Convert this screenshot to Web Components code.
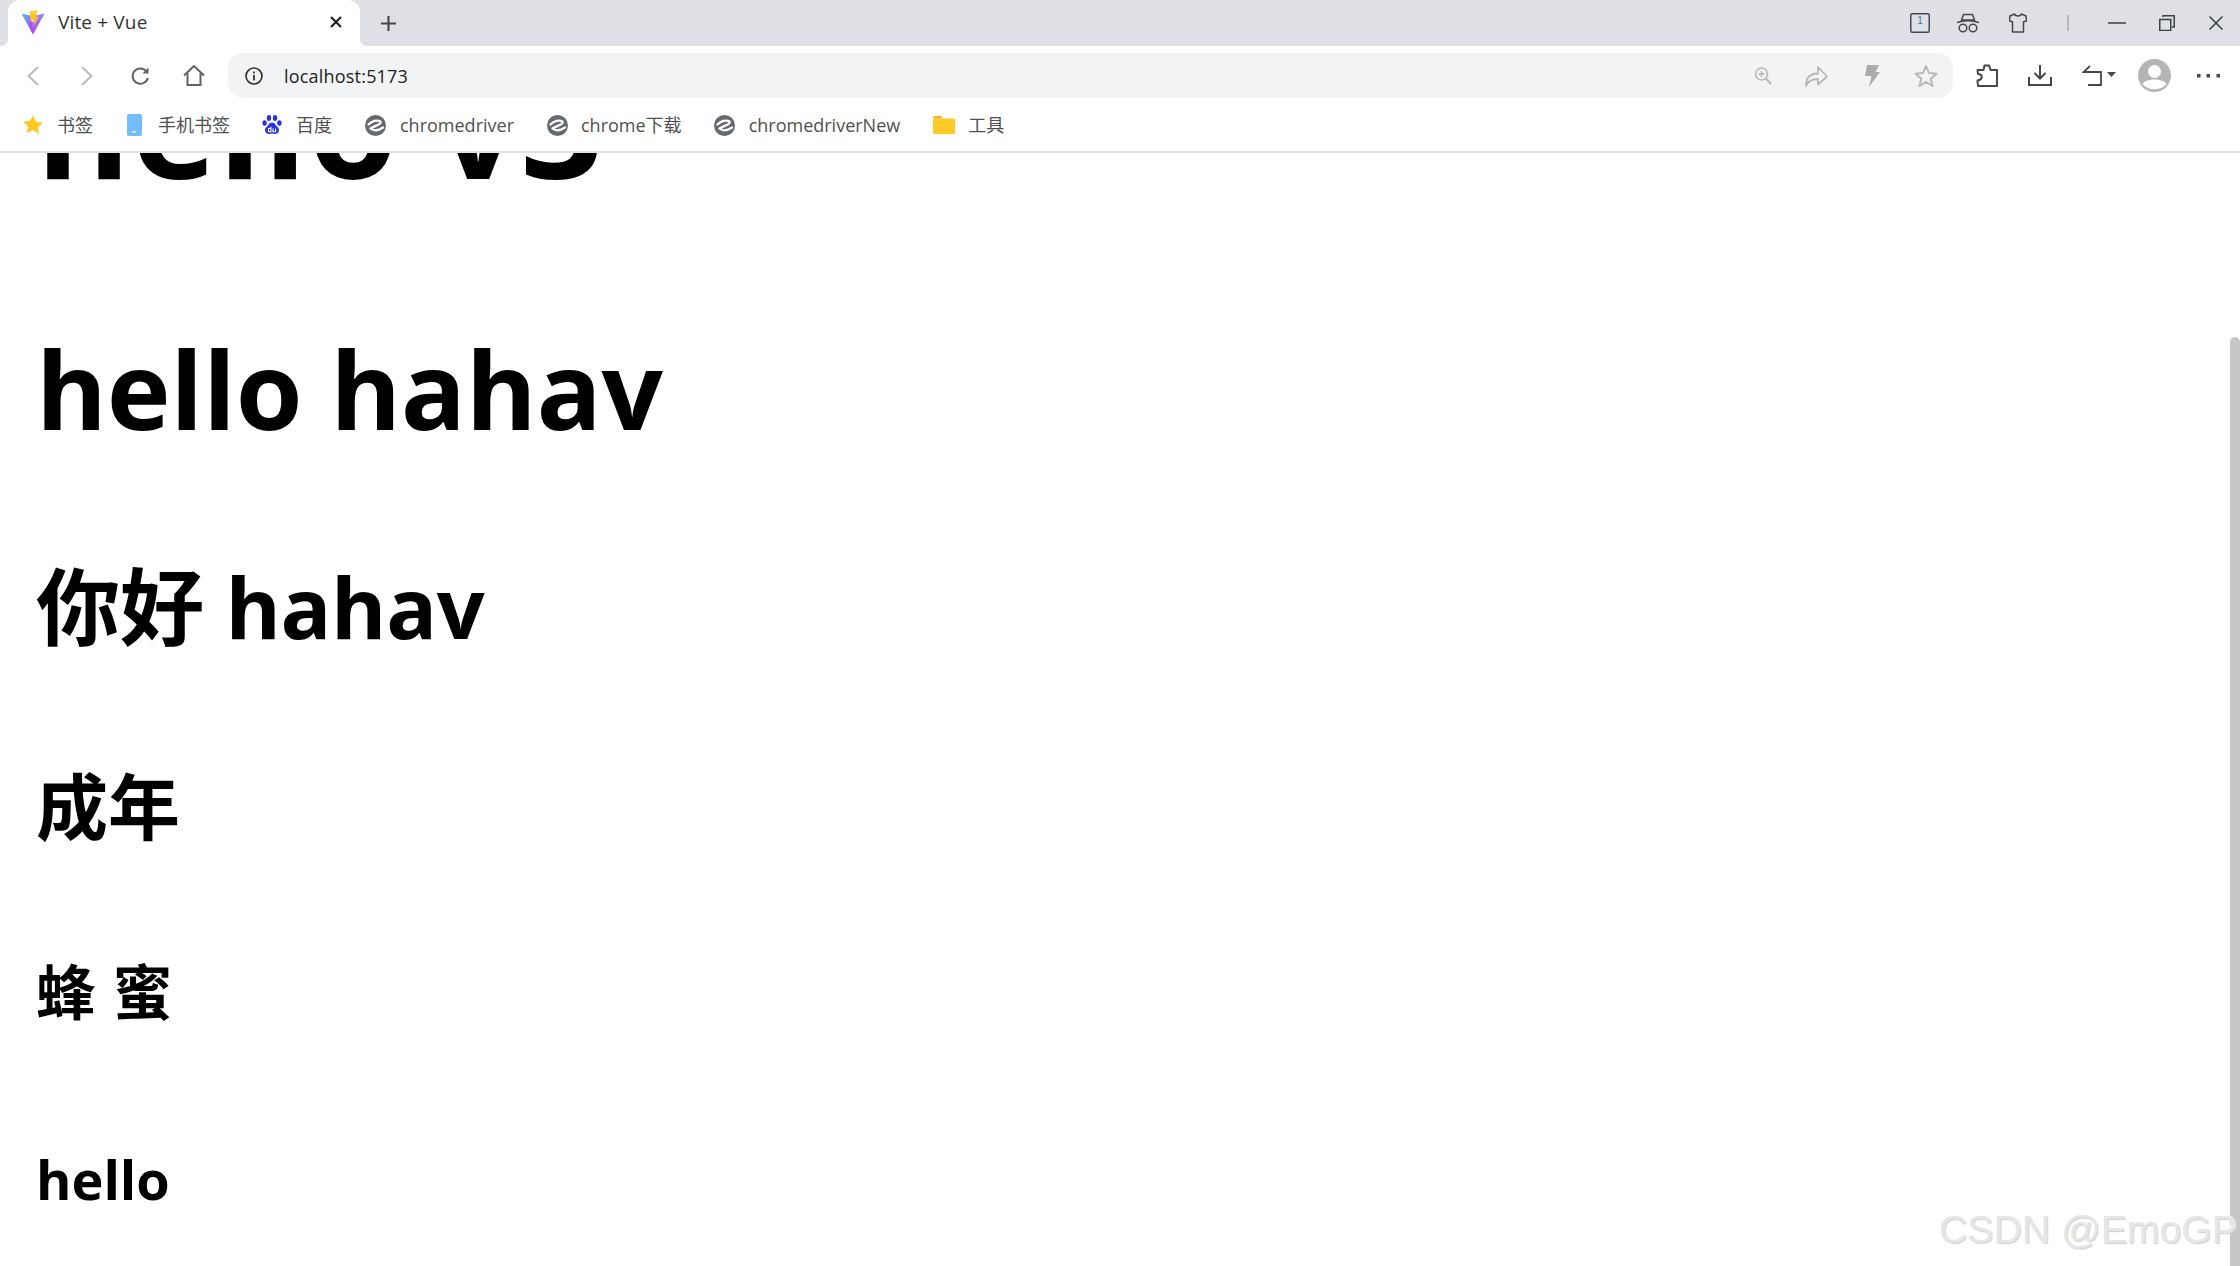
<!DOCTYPE html>
<html lang="zh"><head><meta charset="utf-8"><title>Vite + Vue</title>
<style>
html,body{margin:0;height:100%;overflow:hidden;background:#fff}
body{font-family:"Open Sans","Noto Sans CJK SC",sans-serif}
</style></head><body>
<browser-window>
  <tab-strip></tab-strip>
  <nav-bar></nav-bar>
  <bookmark-bar>
    <bookmark-item label="书签" icon="star" gap="14" width="34"></bookmark-item>
    <bookmark-item label="手机书签" icon="phone" gap="16" width="32"></bookmark-item>
    <bookmark-item label="百度" icon="baidu" gap="14" width="33"></bookmark-item>
    <bookmark-item label="chromedriver" icon="edge" gap="14" width="33"></bookmark-item>
    <bookmark-item label="chrome下载" icon="edge" gap="13" width="32"></bookmark-item>
    <bookmark-item label="chromedriverNew" icon="edge" gap="14" width="33"></bookmark-item>
    <bookmark-item label="工具" icon="folder" gap="13" width="0"></bookmark-item>
  </bookmark-bar>
  <page-view>
    <page-heading size="144" top="-128" line="196" track="1.2">hello v3</page-heading>
    <page-heading size="108" top="94" line="147" track="-.25">hello hahav</page-heading>
    <page-heading size="84.24" top="87" line="115" track="-.3">你好 hahav</page-heading>
    <page-heading size="72" top="93" line="98" track="0">成年</page-heading>
    <page-heading size="59.76" top="97" line="81" track=".7">蜂 蜜</page-heading>
    <page-heading size="54" top="109" line="74" track="0">hello</page-heading>
  </page-view>
</browser-window>
<script>
const S=(w,h,body,extra='')=>`<svg width="${w}" height="${h}" viewBox="0 0 ${w} ${h}" fill="none" ${extra}>${body}</svg>`;
const edge=S(21,21,`<circle cx="10.5" cy="10.5" r="10.5" fill="#666a70"/><path d="M3.500 9.500C7 6 12 4.500 15.500 6.500C17 9.500 10 10.500 5.500 13.500C9 16.500 13.500 15.500 18 12.500" stroke="#fff" stroke-width="2.300" stroke-linecap="round" stroke-linejoin="round"/>`);
const ICONS={
 star:S(20,20,`<path d="M10 .5l3 6.300 6.800.9-5 4.700 1.300 6.800L10 15l-6.100 3.200 1.300-6.800-5-4.700 6.800-.9z" fill="#ffc720"/>`),
 phone:S(15,22,`<rect width="15" height="22" rx="2" fill="#73bcff"/><rect x="5" y="17" width="4" height="1.500" fill="#fff"/>`),
 baidu:S(20,20,`<g fill="#2932e1"><ellipse cx="2.600" cy="8" rx="2.200" ry="2.800"/><ellipse cx="7" cy="3" rx="2.200" ry="2.900"/><ellipse cx="13" cy="3" rx="2.200" ry="2.900"/><ellipse cx="17.400" cy="8" rx="2.200" ry="2.800"/><path d="M10 7.500c3 0 3.500 3 6 5 2 2 1 6.500-3 6.500-1.500 0-2-.5-3-.5s-1.500.5-3 .5c-4 0-5-4.500-3-6.500 2.500-2 3-5 6-5z"/></g><path d="M6.500 13.500v3.300h2.400v-5M6.500 13.500h2.400M11 13.500v3.300h2.600v-3.300" stroke="#fff" stroke-width="1.100"/>`),
 edge,
 folder:S(22,18,`<path d="M0 2a2 2 0 0 1 2-2h6l2 2.500H0z" fill="#ffa733"/><rect y="2.500" width="22" height="15.500" rx="1" fill="#ffc926"/>`)
};
class BrowserWindow extends HTMLElement{constructor(){super();this.attachShadow({mode:'open'}).innerHTML=`<style>
:host{display:flex;flex-direction:column;height:1266px;width:2240px;position:relative;overflow:hidden;background:#fff}
.mark{position:absolute;left:1939px;top:1207px;font:39.2px/46px "Liberation Sans",sans-serif;color:#e6e6e6;text-shadow:1px 1px 1px #cfcfcf,-1px -1px 0 #fff;white-space:nowrap;z-index:3}
</style><slot></slot><span class="mark">CSDN @EmoGP</span>`}}
class TabStrip extends HTMLElement{constructor(){super();this.attachShadow({mode:'open'}).innerHTML=`<style>
:host{display:flex;flex:none;height:46px;background:#dee0e5;align-items:stretch;color:#3c4043}
.tab{margin-left:8px;width:352px;background:#fff;border-radius:12px 12px 0 0;display:flex;align-items:center;padding-left:13px;padding-bottom:2px;box-sizing:border-box;position:relative}
.tab::before,.tab::after{content:"";position:absolute;bottom:0;width:8px;height:8px;background:#fff}
.tab::before{left:-8px;background:radial-gradient(circle at 0 0,#dee0e5 8px,#fff 8.500px)}
.tab::after{right:-8px;background:radial-gradient(circle at 100% 0,#dee0e5 8px,#fff 8.500px)}
.title{font:19px/24px "Open Sans","Noto Sans CJK SC",sans-serif;margin-left:13px;color:#333;flex:1;letter-spacing:.15px}
.close{margin-right:18px;display:flex}.plus{margin-left:21px;align-self:center;display:flex}
.right{margin-left:auto;display:flex;align-items:center}
</style>
<div class="tab">
 ${S(24,25,`<path d="M.5 3.500L12 24.500 23.500 3.500 15 5.500 12 12z" fill="url(#v)"/><path d="M1 3.500L9 5.500 11 14 12 24z" fill="url(#v)"/><path d="M8.500 1.500L16.500 0l-1.800 7 3.500-.9-6 11 .6-7.500-3.600.9z" fill="url(#b)"/><defs><linearGradient id="v" x1="0" y1="0" x2=".7" y2="1"><stop offset="0" stop-color="#41c5ff"/><stop offset=".6" stop-color="#9a6cff"/><stop offset="1" stop-color="#bd34fe"/></linearGradient><linearGradient id="b" x1="0" y1="0" x2="0" y2="1"><stop offset="0" stop-color="#ffd62e"/><stop offset="1" stop-color="#ffa01e"/></linearGradient></defs>`)}
 <span class="title">Vite + Vue</span>
 <span class="close">${S(12,12,`<path d="M1 1l10 10M11 1L1 11" stroke="#222" stroke-width="2.200"/>`)}</span>
</div>
<span class="plus">${S(15,15,`<path d="M7.500 0v15M0 7.500h15" stroke="#45484d" stroke-width="2.200"/>`)}</span>
<div class="right">
 <span style="display:flex">${S(20,20,`<rect x=".75" y=".75" width="18.500" height="18.500" rx="1.500" stroke="#45484d" stroke-width="1.500"/>`)}</span>
 <span style="position:absolute;left:1915px;top:13px;font:10px/16px 'Liberation Sans',sans-serif;width:10px;text-align:center;color:#4a6fa5">1</span>
 <span style="display:flex;margin-left:27px">${S(22,20,`<g stroke="#45484d" stroke-width="1.500"><path d="M4.500 7l2-5.500h9l2 5.500H4.500zM0 9.500C6 7 16 7 22 9.500"/><circle cx="6" cy="15" r="3.800"/><circle cx="16" cy="15" r="3.800"/></g>`)}</span>
 <span style="display:flex;margin-left:30px">${S(18,20,`<path d="M5.500 1L1 3l-.5 5 3 .8V19h11V8.800l3-.8-.5-5-4.500-2C12 3.500 6 3.500 5.500 1z" stroke="#45484d" stroke-width="1.500" stroke-linejoin="round"/>`)}</span>
 <span style="width:2px;height:16px;background:#b7b9bc;margin-left:40px"></span>
 <span style="display:flex;margin-left:39px">${S(18,2,`<path d="M0 1h18" stroke="#3c4043" stroke-width="1.500"/>`)}</span>
 <span style="display:flex;margin-left:33px">${S(16,16,`<path d="M.75 4.500h11v11h-11zM4 2V.75h11.250V12H13" stroke="#3c4043" stroke-width="1.500"/>`)}</span>
 <span style="display:flex;margin-left:34px;margin-right:17px">${S(14,14,`<path d="M.5.500l13 13M13.500.500l-13 13" stroke="#3c4043" stroke-width="1.500"/>`)}</span>
</div>`}}
class NavBar extends HTMLElement{constructor(){super();this.attachShadow({mode:'open'}).innerHTML=`<style>
:host{display:flex;flex:none;height:60px;background:#fff;align-items:center;box-sizing:border-box;padding-bottom:1px}
span{display:flex;align-items:center;flex:none}
.omni{margin-left:23px;width:1725px;height:45px;background:#f1f3f4;border-radius:15px;display:flex;align-items:center;box-sizing:border-box;padding-left:17px;flex:none}
.url{font:18px/24px "Open Sans",sans-serif;color:#222;margin-left:21px;letter-spacing:.2px}
.gap{flex:1}
</style>
<span style="margin-left:27px">${S(12,20,`<path d="M11 1L1.500 10 11 19" stroke="#b5b7ba" stroke-width="1.800"/>`)}</span>
<span style="margin-left:42px">${S(12,20,`<path d="M1 1l9.500 9L1 19" stroke="#b5b7ba" stroke-width="1.800"/>`)}</span>
<span style="margin-left:38px">${S(18,20,`<path d="M15.500 5.500A7.700 7.700 0 1 0 16.800 12" stroke="#5f6368" stroke-width="2"/><path d="M17.500 1.500v6h-6z" fill="#5f6368"/>`)}</span>
<span style="margin-left:34px">${S(22,21,`<path d="M1 10.500L11 1l10 9.500M4.500 8v12h13V8" stroke="#5f6368" stroke-width="2"/>`)}</span>
<div class="omni">
 ${S(18,18,`<circle cx="9" cy="9" r="8" stroke="#333" stroke-width="1.700"/><path d="M9 8v5.500M9 4.500v2" stroke="#333" stroke-width="1.800"/>`)}
 <span class="url">localhost:5173</span><span class="gap"></span>
 ${S(18,20,`<circle cx="7.500" cy="8" r="6" stroke="#b5b7ba" stroke-width="1.500"/><path d="M12 12.500l5 5.500" stroke="#b5b7ba" stroke-width="2"/><path d="M7.500 5v6M4.500 8h6" stroke="#b5b7ba" stroke-width="1.500"/>`)}
 <span style="margin-left:33px">${S(23,22,`<path d="M1 21C1 13 5 8.500 13 8.500V2l9 9.500-9 8V14C7 14 3 16 1 21z" stroke="#b5b7ba" stroke-width="1.800" stroke-linejoin="round"/>`)}</span>
 <span style="margin-left:36px">${S(16,23,`<path d="M3 1h12l-3.500 7H16L5 23l2.500-11H1z" fill="#a9abad"/>`)}</span>
 <span style="margin-left:34px;margin-right:15px">${S(24,23,`<path d="M12 2l3 7 7.500.7-5.700 5 1.700 7.300L12 18l-6.500 4 1.700-7.300-5.700-5L9 9z" stroke="#b5b7ba" stroke-width="1.900" stroke-linejoin="round"/>`)}</span>
</div>
<span style="margin-left:23px">${S(22,23,`<path d="M2 22H21V6H14.500L13 1.500H8.500L7.500 6H1.500L2 10C7 10 7 15.500 1.500 16.500z" stroke="#45484d" stroke-width="2" stroke-linejoin="round"/>`)}</span>
<span style="margin-left:30px">${S(24,21,`<path d="M12 0v13M6.500 8l5.500 5.500L17.500 8M1 12v8h22v-8" stroke="#45484d" stroke-width="2"/>`)}</span>
<span style="margin-left:30px">${S(34,21,`<path d="M8 1L1.500 7h17.500v13H6" stroke="#45484d" stroke-width="1.800"/><path d="M25 7h9l-4.500 5z" fill="#45484d"/>`)}</span>
<span style="margin-left:22px">${S(33,33,`<circle cx="16.500" cy="16.500" r="16.500" fill="#b5b5b5"/><circle cx="16.500" cy="12.500" r="6.500" fill="#fff"/><path d="M4.500 25c3-6 21-6 24 0-6 7-18 7-24 0z" fill="#fff"/>`)}</span>
<span style="margin-left:26px">${S(23,5,`<g fill="#45484d"><rect y="1" width="3.500" height="3.500"/><rect x="9.500" y="1" width="3.500" height="3.500"/><rect x="19.500" y="1" width="3.500" height="3.500"/></g>`)}</span>`}}
class BookmarkBar extends HTMLElement{constructor(){super();this.attachShadow({mode:'open'}).innerHTML=`<style>
:host{display:flex;flex:none;height:47px;background:#fff;align-items:center;padding-left:23px;padding-bottom:7px;box-sizing:border-box;border-bottom:2px solid #e1e1e1}
</style><slot></slot>`}}
class BookmarkItem extends HTMLElement{constructor(){super();const r=this.attachShadow({mode:'open'});const g=this.getAttribute('gap'),w=this.getAttribute('width');
r.innerHTML=`<style>:host{display:flex;align-items:center;flex:none;margin-right:${w}px}
svg{display:block;flex:none}
.t{font:18px/24px "Open Sans","Noto Sans CJK SC",sans-serif;color:#505050;margin-left:${g}px;white-space:nowrap}</style>
${ICONS[this.getAttribute('icon')]}<span class="t">${this.getAttribute('label')}</span>`}}
class PageView extends HTMLElement{constructor(){super();this.attachShadow({mode:'open'}).innerHTML=`<style>
:host{display:block;flex:1;min-height:0;overflow:hidden;position:relative;background:#fff;padding-left:36px}
.bar{position:absolute;right:0;top:184px;bottom:0;width:10px;background:#c7c7c7;border-radius:5px 5px 0 0}
</style><slot></slot><div class="bar"></div>`}}
class PageHeading extends HTMLElement{constructor(){super();const s=this.getAttribute('size'),t=this.getAttribute('top'),l=this.getAttribute('line'),k=this.getAttribute('track');
this.attachShadow({mode:'open'}).innerHTML=`<style>
:host{display:block;font:700 ${s}px/${l}px "Open Sans","Noto Sans CJK SC",sans-serif;letter-spacing:${k}px;color:#000;margin-top:${t}px;white-space:nowrap}
</style><slot></slot>`}}
customElements.define('browser-window',BrowserWindow);
customElements.define('tab-strip',TabStrip);
customElements.define('nav-bar',NavBar);
customElements.define('bookmark-bar',BookmarkBar);
customElements.define('bookmark-item',BookmarkItem);
customElements.define('page-view',PageView);
customElements.define('page-heading',PageHeading);
</script>
</body></html>
